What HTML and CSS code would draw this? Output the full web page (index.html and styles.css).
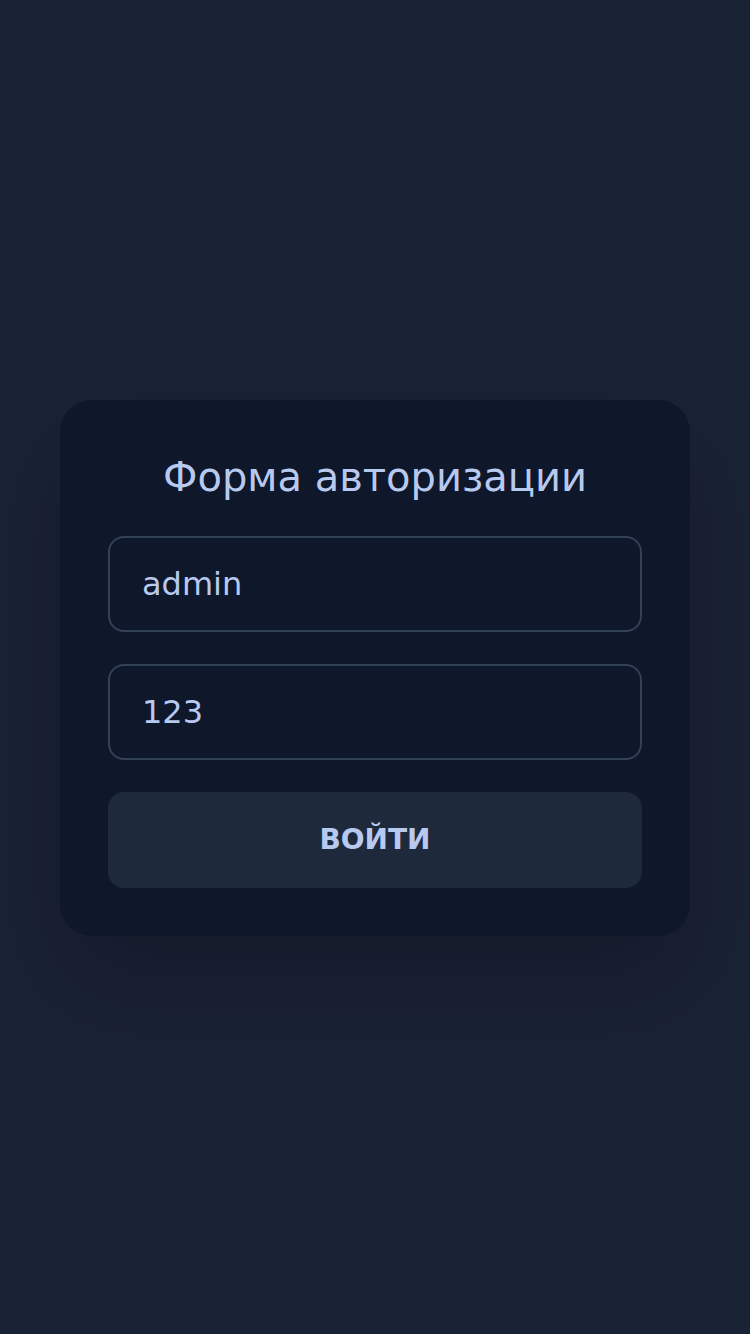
FILE: index.html
```html
<!DOCTYPE html>
<html lang="ru">
<head>
<meta charset="utf-8">
<title>Форма авторизации</title>
<link rel="stylesheet" href="styles.css">
</head>
<body>
<main class="page">
  <form class="card">
    <h1 class="title">Форма авторизации</h1>
    <input class="field" type="text" value="admin">
    <input class="field" type="text" value="123">
    <button class="btn" type="button">ВОЙТИ</button>
  </form>
</main>
</body>
</html>
```
FILE: styles.css
```css
* { box-sizing: border-box; }
html, body { margin: 0; padding: 0; }
body {
  background: #1a2236;
  font-family: "DejaVu Sans", sans-serif;
  color: #b8c9f0;
}
.page {
  min-height: 1334px;
  padding-top: 1px;
  display: flex;
  align-items: center;
  justify-content: center;
}
.card {
  width: 630px;
  background: #0f172a;
  border-radius: 32px;
  padding: 48px;
  display: flex;
  flex-direction: column;
  gap: 32px;
  box-shadow: 0 48px 100px rgba(0, 0, 0, 0.22);
}
.title {
  margin: 5px 0 3px;
  font-size: 40px;
  font-weight: normal;
  text-align: center;
  line-height: 1.2;
  color: #b8c9f0;
}
.field {
  height: 96px;
  border: 2px solid #334155;
  border-radius: 16px;
  background: #0f172a;
  padding: 0 32px;
  font-family: "DejaVu Sans", sans-serif;
  font-size: 32px;
  color: #b8c9f0;
  outline: none;
}
.btn {
  height: 96px;
  border: none;
  border-radius: 16px;
  background: #1e293b;
  font-family: "DejaVu Sans", sans-serif;
  font-size: 28px;
  font-weight: bold;
  color: #b8c9f0;
}
```
